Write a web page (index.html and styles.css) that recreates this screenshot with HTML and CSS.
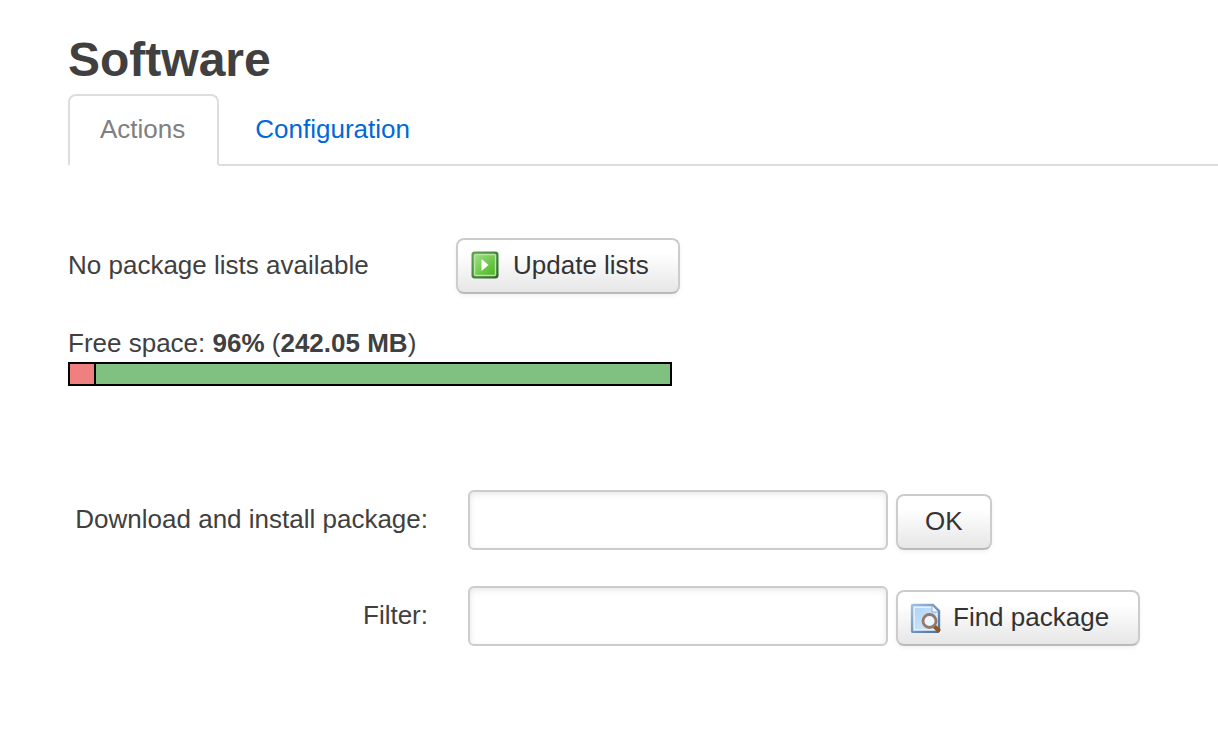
FILE: index.html
```html
<!DOCTYPE html>
<html lang="en">
<head>
<meta charset="utf-8">
<title>Software</title>
<link rel="stylesheet" href="styles.css">
</head>
<body>
<main class="page">
  <h1 class="title">Software</h1>
  <nav class="tabs">
    <a class="tab tab-active" href="#actions" aria-current="page">Actions</a>
    <a class="tab" href="#configuration">Configuration</a>
  </nav>

  <section class="lists">
    <span class="lists-status">No package lists available</span>
    <button class="btn btn-icon" type="button">
      <svg class="icon" viewBox="0 0 32 32" aria-hidden="true">
        <defs>
          <linearGradient id="green" x1="0" y1="0" x2="1" y2="1">
            <stop offset="0" stop-color="#a2df86"/>
            <stop offset="1" stop-color="#48b51d"/>
          </linearGradient>
          <linearGradient id="frame" x1="0" y1="0" x2="1" y2="1">
            <stop offset="0" stop-color="#5fa854"/>
            <stop offset="1" stop-color="#2f6428"/>
          </linearGradient>
        </defs>
        <rect x="2.500" y="2.500" width="27" height="27" rx="3" fill="url(#frame)"/>
        <rect x="5.500" y="5.500" width="21" height="21" rx="1" fill="url(#green)" stroke="#b5e79e" stroke-width="1.500"/>
        <path d="M12.500 10v12l7-6z" fill="#fff"/>
      </svg>
      Update lists
    </button>
  </section>

  <section class="space">
    <div class="space-text">Free space: <strong>96%</strong> (<strong>242.05 MB</strong>)</div>
    <div class="meter"><div class="meter-used" style="width: 4%"></div></div>
  </section>

  <form class="form">
    <div class="row">
      <label class="label" for="package">Download and install package:</label>
      <div class="controls">
        <input class="field" id="package" type="text">
        <button class="btn" type="button">OK</button>
      </div>
    </div>
    <div class="row">
      <label class="label" for="filter">Filter:</label>
      <div class="controls">
        <input class="field" id="filter" type="text">
        <button class="btn btn-icon" type="button">
          <svg class="icon" viewBox="-1 -2 32 32" aria-hidden="true">
            <defs>
              <linearGradient id="sheet" x1="0" y1="0" x2="1" y2="1">
                <stop offset="0" stop-color="#b0d5f7"/>
                <stop offset="1" stop-color="#d4e9fb"/>
              </linearGradient>
              <linearGradient id="edge" x1="0" y1="0" x2="1" y2="1">
                <stop offset="0" stop-color="#9dbfe0"/>
                <stop offset="1" stop-color="#4d6f9d"/>
              </linearGradient>
            </defs>
            <path d="M0 0h27l4 4v27H0z" fill="#fff"/>
            <path d="M3 2h20l6 6v19a2 2 0 0 1-2 2H3a1 1 0 0 1-1-1V3a1 1 0 0 1 1-1z" fill="#e3f0fc" stroke="url(#edge)" stroke-width="2.500"/>
            <path d="M5 5h17v4h4v17H5z" fill="url(#sheet)"/>
            <path d="M22 3v6h6" fill="#f3f9ff" stroke="#86add6"/>
            <path d="M24 23l5.500 5.500" stroke="#925421" stroke-width="4"/>
            <circle cx="19.500" cy="18" r="6.500" fill="#eef5fc" stroke="#93796a" stroke-width="2.800"/>
          </svg>
          Find package
        </button>
      </div>
    </div>
  </form>
</main>
</body>
</html>
```
FILE: styles.css
```css
* {
  box-sizing: border-box;
}

body {
  margin: 0;
  background: #fff;
  color: #404040;
  font: 26px/36px "Helvetica Neue", Helvetica, "Liberation Sans", Arial, sans-serif;
}

.page {
  padding: 26px 0 40px 68px;
}

.title {
  margin: 0;
  font-size: 48px;
  line-height: 68px;
}

.tabs {
  display: flex;
  gap: 4px;
  border-bottom: 2px solid #ddd;
}

.tab {
  margin-bottom: -2px;
  padding: 15px 32px 17px 30px;
  border: 2px solid transparent;
  border-radius: 8px 8px 0 0;
  color: #0069d6;
  text-decoration: none;
}

.tab-active {
  border-color: #ddd;
  border-bottom-color: #fff;
  background: #fff;
  color: #808080;
}

.lists {
  display: grid;
  grid-template-columns: 388px auto;
  justify-content: start;
  align-items: center;
  margin-top: 72px;
}

.lists-status,
.label {
  padding-bottom: 2px;
}

.btn {
  display: inline-flex;
  align-items: center;
  height: 56px;
  padding: 0 27px 2px;
  border: 2px solid #ccc;
  border-bottom-color: #bbb;
  border-radius: 8px;
  background: linear-gradient(#fff, #fff 25%, #e6e6e6);
  box-shadow: 0 2px 4px rgba(0, 0, 0, 0.05);
  color: #333;
  font: inherit;
  white-space: nowrap;
}

.btn-icon {
  gap: 12px;
  padding-right: 29px;
  padding-left: 11px;
}

.icon {
  width: 32px;
  height: 32px;
}

.space {
  margin-top: 32px;
}

.space-text {
  padding-bottom: 2px;
  line-height: 34px;
}

.meter {
  width: 604px;
  max-width: 100%;
  height: 24px;
  border: 2px solid #000;
  background: #80c080;
}

.meter-used {
  box-sizing: content-box;
  height: 100%;
  border-right: 2px solid #000;
  background: #f08080;
}

.form {
  display: grid;
  gap: 36px;
  margin-top: 104px;
}

.row {
  display: grid;
  grid-template-columns: 360px auto;
  justify-content: start;
  align-items: center;
  gap: 40px;
}

.label {
  text-align: right;
}

.controls {
  display: flex;
  align-items: flex-end;
  gap: 8px;
}

.field {
  width: 420px;
  height: 60px;
  padding: 8px;
  border: 2px solid #ccc;
  border-radius: 6px;
  background: #fff;
  box-shadow: inset 0 2px 6px rgba(0, 0, 0, 0.1);
  color: #808080;
  font: inherit;
}
```
